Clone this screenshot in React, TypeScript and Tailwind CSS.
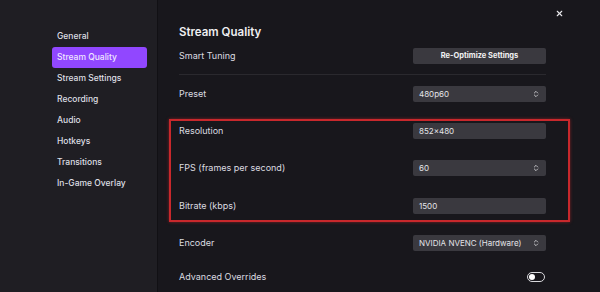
import { X, ChevronsUpDown } from "lucide-react";

const navItems = [
    "General",
    "Stream Quality",
    "Stream Settings",
    "Recording",
    "Audio",
    "Hotkeys",
    "Transitions",
    "In-Game Overlay",
];

const Select = ({ value }: { value: string }) => (
    <div className="flex h-[16px] w-[133px] items-center justify-between rounded-[2px] bg-[#3a393f] pl-[6px] pr-[6px] text-[8px] text-[#e4e4e8]">
        <span>{value}</span>
        <ChevronsUpDown size={8} strokeWidth={2.5} className="text-[#d8d8dc]" />
    </div>
);

const Input = ({ value }: { value: string }) => (
    <div className="flex h-[16px] w-[133px] items-center rounded-[2px] bg-[#3a393f] pl-[6px] text-[8px] text-[#e4e4e8]">
        {value}
    </div>
);

const Row = ({ label, children, className = "" }: { label: string; children: React.ReactNode; className?: string }) => (
    <div className={`flex h-[16px] items-center justify-between ${className}`}>
        <span className="text-[9px] text-[#dcdce0]">{label}</span>
        {children}
    </div>
);

export default function App() {
    return (
        <div className="flex h-[292px] w-[600px] overflow-hidden bg-[#18171c] font-['Inter',sans-serif]">
            <div className="flex w-[158px] shrink-0 flex-col border-r border-[#111014] bg-[#1f1e23] pl-[52px] pr-[10px] pt-[26px]">
                {navItems.map((item) => (
                    <div
                        key={item}
                        className={
                            item === "Stream Quality"
                                ? "flex h-[21px] items-center rounded-[3px] bg-[#9147ff] px-[5px] text-[8.5px] font-medium text-[#efe6ff]"
                                : "flex h-[21px] items-center px-[5px] text-[8.5px] font-medium text-[#dedee3]"
                        }
                    >
                        {item}
                    </div>
                ))}
            </div>
            <div className="relative flex-1 pl-[21px] pt-[24px]">
                <X size={9} strokeWidth={3} className="absolute left-[397px] top-[9px] text-[#e8e8ec]" />
                <div className="flex w-[367px] flex-col">
                    <h1 className="h-[16px] text-[11.5px] font-semibold leading-[16px] text-[#efeff1]">Stream Quality</h1>
                    <Row label="Smart Tuning" className="mt-[8px]">
                        <div className="flex h-[16px] w-[133px] items-center justify-center rounded-[2px] bg-[#3a393f] text-[7.5px] font-bold text-[#f2f2f4]">
                            Re-Optimize Settings
                        </div>
                    </Row>
                    <div className="mt-[10px] border-t border-[#2a292e]" />
                    <Row label="Preset" className="mt-[11px]">
                        <Select value="480p60" />
                    </Row>
                    <div className="-ml-[10px] -mr-[24px] mt-[17px] border-2 border-[#c8282c] pb-[6px] pl-[8px] pr-[22px] pt-[2px] shadow-[0_0_3px_rgba(200,40,44,0.6)]">
                        <Row label="Resolution">
                            <Input value="852×480" />
                        </Row>
                        <Row label="FPS (frames per second)" className="mt-[21px]">
                            <Select value="60" />
                        </Row>
                        <Row label="Bitrate (kbps)" className="mt-[22px]">
                            <Input value="1500" />
                        </Row>
                    </div>
                    <Row label="Encoder" className="mt-[13px]">
                        <Select value="NVIDIA NVENC (Hardware)" />
                    </Row>
                    <Row label="Advanced Overrides" className="mt-[18px]">
                        <div className="mr-[1px] flex h-[10px] w-[18px] items-center rounded-full border border-[#d8d8dc] px-[1px]">
                            <div className="h-[6px] w-[6px] rounded-full bg-white" />
                        </div>
                    </Row>
                </div>
            </div>
        </div>
    );
}
